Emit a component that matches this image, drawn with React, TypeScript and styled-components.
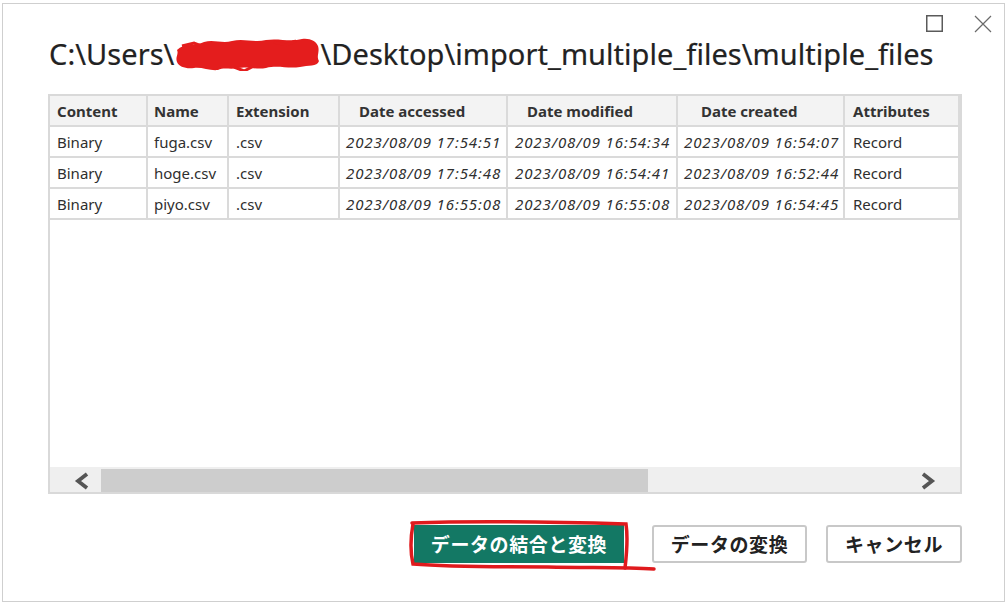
import React from "react";
import styled, { createGlobalStyle } from "styled-components";

const GlobalStyle = createGlobalStyle`
  html, body { margin: 0; padding: 0; background: #ffffff; }
  body { font-family: "Noto Sans", "Noto Sans CJK JP", sans-serif; color: #2b2b2b; }
  * { box-sizing: border-box; }
`;

const Page = styled.div`
  padding: 3px 0 0 2px;
`;

const Window = styled.div`
  width: 1003px;
  height: 599px;
  border: 1px solid #cfcfcf;
  display: flex;
  flex-direction: column;
  background: #fff;
`;

const TitleBar = styled.div`
  display: flex;
  justify-content: flex-end;
  align-items: center;
  gap: 31px;
  padding: 11px 12px 0 0;
  height: 28px;
`;

const CtrlIcon = styled.svg`
  display: block;
`;

const Title = styled.h1`
  margin: 2px 0 0 46px;
  font-family: "Noto Sans", sans-serif;
  font-weight: 400;
  font-size: 29px;
  line-height: 40px;
  letter-spacing: 0.05px;
  color: #222222;
  white-space: nowrap;
  -webkit-text-stroke: 0.2px #222222;
`;

const Redaction = styled.span`
  display: inline-block;
  width: 146px;
  height: 34px;
  vertical-align: -6px;
`;

const Table = styled.div`
  margin: 20px 0 0 45px;
  width: 914px;
  height: 400px;
  border: 2px solid #d9d9d9;
  display: flex;
  flex-direction: column;
`;

const Grid = styled.div`
  display: grid;
  grid-template-columns: 98px 81px 111px 168px 170px 167px 115px;
`;

const Cell = styled.div<{ $head?: boolean; $italic?: boolean; $pad?: number }>`
  height: 31px;
  line-height: 30px;
  padding-left: ${(p) => p.$pad ?? 7}px;
  border-right: 2px solid #dadada;
  border-bottom: 2px solid #dadada;
  background: ${(p) => (p.$head ? "#f3f3f3" : "#ffffff")};
  font-family: "Noto Sans", sans-serif;
  font-size: 15px;
  font-weight: ${(p) => (p.$head ? 700 : 400)};
  font-style: ${(p) => (p.$italic ? "italic" : "normal")};
  letter-spacing: ${(p) => (p.$italic ? "0.9px" : "0")};
  color: ${(p) => (p.$head ? "#333333" : "#2f2f2f")};
  white-space: nowrap;
  overflow: hidden;
`;

const Empty = styled.div`
  flex: 1;
`;

const ScrollBar = styled.div`
  height: 25px;
  background: #efefef;
  display: flex;
  align-items: stretch;
`;

const ArrowBox = styled.div<{ $w: number; $left: number }>`
  width: ${(p) => p.$w}px;
  display: flex;
  align-items: center;
  padding: 2px 0 0 ${(p) => p.$left}px;
`;

const Thumb = styled.div`
  width: 547px;
  margin-top: 2px;
  background: #cdcdcd;
`;

const Track = styled.div`
  flex: 1;
`;

const ButtonRow = styled.div`
  display: flex;
  justify-content: flex-end;
  gap: 19px;
  padding-right: 42px;
  margin-top: 31px;
`;

const Btn = styled.button<{ $primary?: boolean; $w: number }>`
  position: relative;
  width: ${(p) => p.$w}px;
  height: 38px;
  margin-right: ${(p) => (p.$primary ? 9 : 0)}px;
  border: 2px solid ${(p) => (p.$primary ? "#137864" : "#c8c8c8")};
  border-radius: ${(p) => (p.$primary ? 0 : 3)}px;
  background: ${(p) => (p.$primary ? "#137864" : "#ffffff")};
  color: ${(p) => (p.$primary ? "#ffffff" : "#222222")};
  font-family: "Noto Sans CJK JP", "Noto Sans", sans-serif;
  font-weight: 700;
  font-size: 19px;
  letter-spacing: 0.6px;
  padding: 0;
  line-height: 34px;
  cursor: pointer;
`;

const Annotation = styled.svg`
  position: absolute;
  left: -8px;
  top: -6px;
  pointer-events: none;
  overflow: visible;
`;

const rows = [
  ["Binary", "fuga.csv", ".csv", "2023/08/09 17:54:51", "2023/08/09 16:54:34", "2023/08/09 16:54:07", "Record"],
  ["Binary", "hoge.csv", ".csv", "2023/08/09 17:54:48", "2023/08/09 16:54:41", "2023/08/09 16:52:44", "Record"],
  ["Binary", "piyo.csv", ".csv", "2023/08/09 16:55:08", "2023/08/09 16:55:08", "2023/08/09 16:54:45", "Record"],
];

const headers: [string, number][] = [
  ["Content", 7],
  ["Name", 6],
  ["Extension", 7],
  ["Date accessed", 19],
  ["Date modified", 19],
  ["Date created", 23],
  ["Attributes", 8],
];

export default function App() {
  return (
    <>
      <GlobalStyle />
      <Page>
        <Window>
          <TitleBar>
            <CtrlIcon width="17" height="17" viewBox="0 0 17 17">
              <rect x="0.75" y="0.75" width="15.5" height="15.5" fill="none" stroke="#5a5a5a" strokeWidth="1.5" />
            </CtrlIcon>
            <CtrlIcon width="18" height="18" viewBox="0 0 18 18">
              <path d="M1 1 L17 17 M17 1 L1 17" stroke="#6a6a6a" strokeWidth="1.2" fill="none" />
            </CtrlIcon>
          </TitleBar>
          <Title>
            C:\Users\
            <Redaction>
              <svg width="146" height="34" viewBox="0 0 146 34">
                <path
                  d="M3 13 C 10 6, 22 9, 30 5 C 40 2, 48 7, 58 4 C 70 1, 80 6, 92 3 C 104 1, 116 5, 128 2 C 136 1, 142 4, 144 9 C 146 15, 142 19, 145 24 C 143 30, 134 28, 126 30 C 114 32, 104 28, 92 31 C 82 33, 74 29, 64 31 C 56 33, 50 30, 44 33 C 36 34, 28 30, 20 31 C 12 32, 5 30, 3 25 C 1 20, 5 17, 3 13 Z"
                  fill="#e41d1d"
                />
                <path d="M8 9 L20 6 L30 10 M100 5 L112 8 L122 4 M60 30 L70 34 L78 30" stroke="#e41d1d" strokeWidth="3" fill="none" />
              </svg>
            </Redaction>
            \Desktop\import_multiple_files\multiple_files
          </Title>
          <Table>
            <Grid>
              {headers.map(([h, pad]) => (
                <Cell key={h} $head $pad={pad}>
                  {h}
                </Cell>
              ))}
              {rows.map((r, i) =>
                r.map((v, j) => (
                  <Cell key={`${i}-${j}`} $italic={j >= 3 && j <= 5} $pad={j === 1 || j === 3 || j === 5 ? 6 : j === 6 ? 8 : 7}>
                    {v}
                  </Cell>
                ))
              )}
            </Grid>
            <Empty />
            <ScrollBar>
              <ArrowBox $w={51} $left={24}>
                <svg width="15" height="18" viewBox="0 0 15 18">
                  <path d="M13 2 L4 9 L13 16" stroke="#555" strokeWidth="3.8" fill="none" />
                </svg>
              </ArrowBox>
              <Thumb />
              <Track />
              <ArrowBox $w={49} $left={10}>
                <svg width="15" height="18" viewBox="0 0 15 18">
                  <path d="M2 2 L11 9 L2 16" stroke="#555" strokeWidth="3.8" fill="none" />
                </svg>
              </ArrowBox>
            </ScrollBar>
          </Table>
          <ButtonRow>
            <Btn $primary $w={210}>
              データの結合と変換
              <Annotation width="250" height="52" viewBox="0 0 250 52">
                <path
                  d="M5 3 C 3 14, 2 30, 5 43 C 30 45, 80 46, 140 46 C 180 47, 215 46, 246 48"
                  stroke="#e01a1d"
                  strokeWidth="3.5"
                  fill="none"
                  strokeLinecap="round"
                />
                <path
                  d="M4 2 C 60 0, 150 1, 218 3 C 220 16, 219 30, 217 47"
                  stroke="#e01a1d"
                  strokeWidth="3.5"
                  fill="none"
                  strokeLinecap="round"
                />
              </Annotation>
            </Btn>
            <Btn $w={155}>データの変換</Btn>
            <Btn $w={136}>キャンセル</Btn>
          </ButtonRow>
        </Window>
      </Page>
    </>
  );
}
